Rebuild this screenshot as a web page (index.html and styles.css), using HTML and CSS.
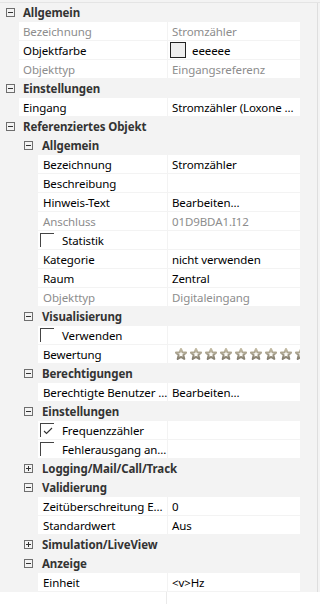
FILE: index.html
```html
<!DOCTYPE html>
<html lang="de">
<head>
<meta charset="utf-8">
<title>Eigenschaften</title>
<link rel="stylesheet" href="styles.css">
</head>
<body>
<svg width="0" height="0" class="defs">
  <defs>
    <linearGradient id="sg" x1="0" y1="0" x2="0" y2="1">
      <stop offset="0" stop-color="#c4bca4"/>
      <stop offset="1" stop-color="#857e70"/>
    </linearGradient>
    <symbol id="star" viewBox="0 0 12 12">
      <path d="M6 0.9 L7.5 4.3 L11.2 4.6 L8.4 7.1 L9.3 10.9 L6 8.9 L2.7 10.9 L3.6 7.1 L0.8 4.6 L4.5 4.3 Z" fill="#fbfaf6" stroke="url(#sg)" stroke-width="2" stroke-linejoin="round"/>
    </symbol>
  </defs>
</svg>
<div class="panel">
  <div class="topline"></div>
  <div class="main">
    <div class="grid">
      <div class="cat l0"><span class="exp minus"></span><span class="cat-name">Allgemein</span></div>
      <div class="prop l0"><div class="name dis">Bezeichnung</div><div class="val dis">Stromzähler</div></div>
      <div class="prop l0"><div class="name">Objektfarbe</div><div class="val"><span class="swatch"></span>eeeeee</div></div>
      <div class="prop l0"><div class="name dis">Objekttyp</div><div class="val dis">Eingangsreferenz</div></div>
      <div class="cat l0"><span class="exp minus"></span><span class="cat-name">Einstellungen</span></div>
      <div class="prop l0"><div class="name">Eingang</div><div class="val">Stromzähler (Loxone ...</div></div>
      <div class="cat l0"><span class="exp minus"></span><span class="cat-name">Referenziertes Objekt</span></div>
      <div class="cat l1"><span class="exp minus"></span><span class="cat-name">Allgemein</span></div>
      <div class="prop l1"><div class="name">Bezeichnung</div><div class="val">Stromzähler</div></div>
      <div class="prop l1"><div class="name">Beschreibung</div><div class="val"></div></div>
      <div class="prop l1"><div class="name">Hinweis-Text</div><div class="val">Bearbeiten...</div></div>
      <div class="prop l1"><div class="name dis">Anschluss</div><div class="val dis">01D9BDA1.I12</div></div>
      <div class="prop l1"><div class="name"><span class="chk"></span>Statistik</div><div class="val"></div></div>
      <div class="prop l1"><div class="name">Kategorie</div><div class="val">nicht verwenden</div></div>
      <div class="prop l1"><div class="name">Raum</div><div class="val">Zentral</div></div>
      <div class="prop l1"><div class="name dis">Objekttyp</div><div class="val dis">Digitaleingang</div></div>
      <div class="cat l1"><span class="exp minus"></span><span class="cat-name">Visualisierung</span></div>
      <div class="prop l1"><div class="name"><span class="chk"></span>Verwenden</div><div class="val"></div></div>
      <div class="prop l1"><div class="name">Bewertung</div><div class="val stars">
        <svg class="star"><use href="#star"/></svg><svg class="star"><use href="#star"/></svg><svg class="star"><use href="#star"/></svg><svg class="star"><use href="#star"/></svg><svg class="star"><use href="#star"/></svg><svg class="star"><use href="#star"/></svg><svg class="star"><use href="#star"/></svg><svg class="star"><use href="#star"/></svg><svg class="star"><use href="#star"/></svg>
      </div></div>
      <div class="cat l1"><span class="exp minus"></span><span class="cat-name">Berechtigungen</span></div>
      <div class="prop l1"><div class="name">Berechtigte Benutzer ...</div><div class="val">Bearbeiten...</div></div>
      <div class="cat l1"><span class="exp minus"></span><span class="cat-name">Einstellungen</span></div>
      <div class="prop l1"><div class="name"><span class="chk"><svg class="tick" viewBox="0 0 10 8"><path d="M1 4 L3.5 6.5 L9 1" fill="none" stroke="#333" stroke-width="1.1"/></svg></span>Frequenzzähler</div><div class="val"></div></div>
      <div class="prop l1"><div class="name"><span class="chk"></span>Fehlerausgang an...</div><div class="val"></div></div>
      <div class="cat l1"><span class="exp plus"></span><span class="cat-name">Logging/Mail/Call/Track</span></div>
      <div class="cat l1"><span class="exp minus"></span><span class="cat-name">Validierung</span></div>
      <div class="prop l1"><div class="name">Zeitüberschreitung E...</div><div class="val">0</div></div>
      <div class="prop l1"><div class="name">Standardwert</div><div class="val">Aus</div></div>
      <div class="cat l1"><span class="exp plus"></span><span class="cat-name">Simulation/LiveView</span></div>
      <div class="cat l1"><span class="exp minus"></span><span class="cat-name">Anzeige</span></div>
      <div class="prop l1"><div class="name">Einheit</div><div class="val">&lt;v&gt;Hz</div></div>
    </div>
    <div class="gutter"></div>
  </div>
  <div class="bottom"><div class="bcol"></div></div>
</div>
</body>
</html>
```
FILE: styles.css
```css
* { box-sizing: border-box; }
html, body { margin: 0; padding: 0; }
body {
  background: #f3f3f3;
  font-family: "Noto Sans", "Open Sans", sans-serif;
  font-size: 11.5px;
  letter-spacing: -0.1px;
  color: #000;
}
.defs { position: absolute; width: 0; height: 0; }
.panel { width: 320px; height: 604px; display: flex; flex-direction: column; overflow: hidden; }
.topline { height: 3px; border-bottom: 1px solid #e4e4e4; background: #f3f3f3; }
.main { display: flex; }
.grid { width: 300px; display: flex; flex-direction: column; }
.gutter { width: 18px; border-right: 1px solid #dedede; background: #f3f3f3; }
.cat, .prop { height: 18px; margin-bottom: 1px; display: flex; align-items: center; white-space: nowrap; }
.cat { font-weight: bold; color: #333; }
.cat.l0 { padding-left: 6px; }
.cat.l1 { padding-left: 24px; }
.exp { width: 9px; height: 9px; border: 1px solid #6e6e6e; position: relative; margin-right: 8px; flex: none; }
.exp::before { content: ""; position: absolute; left: 1px; top: 3px; width: 5px; height: 1px; background: #333; }
.exp.plus::after { content: ""; position: absolute; left: 3px; top: 1px; width: 1px; height: 5px; background: #333; }
.cat.l1 .exp { margin-right: 9px; }
.prop.l0 { padding-left: 19px; }
.prop.l1 { padding-left: 38px; }
.name { flex: 1; height: 18px; background: #fff; display: flex; align-items: center; padding-left: 4px; overflow: hidden; min-width: 0; }
.prop.l1 .name { padding-left: 5px; }
.val { width: 132px; margin-left: 1px; height: 18px; background: #fff; display: flex; align-items: center; padding-left: 4px; overflow: hidden; flex: none; }
.dis { color: #8d8d8d; }
.swatch { width: 16px; height: 16px; border: 1px solid #222; background: #eeeeee; margin: 0 6px 0 -2px; flex: none; }
.chk { width: 14px; height: 14px; border-top: 1px solid #444; border-left: 1px solid #444; margin: 0 8px 0 -3px; flex: none; display: flex; align-items: center; justify-content: center; }
.tick { width: 10px; height: 8px; }
.stars { padding-left: 7px; gap: 3px; }
.star { width: 12px; height: 12px; flex: none; }
.bottom { flex: 1; background: #fff; display: flex; }
.bcol { width: 167px; border-right: 1px solid #eaeaea; }
```
